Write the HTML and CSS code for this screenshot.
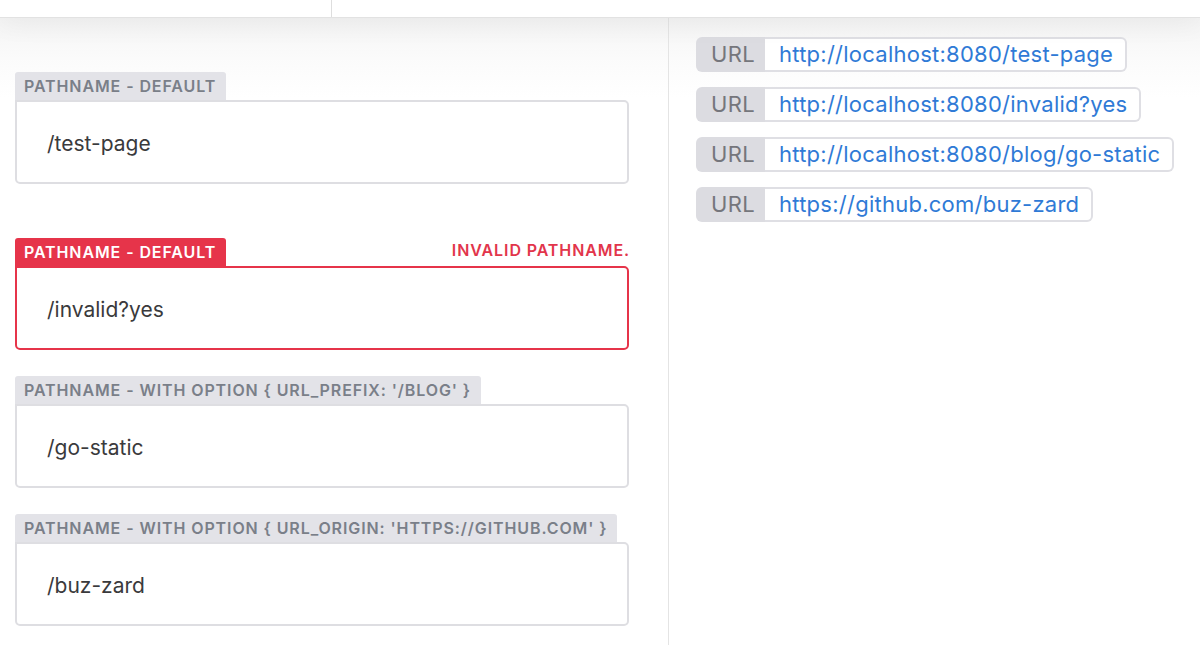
FILE: index.html
```html
<!DOCTYPE html>
<html>
<head>
<meta charset="utf-8">
<link rel="stylesheet" href="styles.css">
</head>
<body>
<div class="topbar">
  <div class="topbar-left"></div>
  <div class="topbar-right"></div>
</div>
<div class="main">
  <div class="left">
    <div class="field field--first">
      <div class="field-head">
        <span class="tab">Pathname - default</span>
      </div>
      <div class="box">/test-page</div>
    </div>
    <div class="field field--error">
      <div class="field-head">
        <span class="tab">Pathname - default</span>
        <span class="error">Invalid pathname.</span>
      </div>
      <div class="box">/invalid?yes</div>
    </div>
    <div class="field">
      <div class="field-head">
        <span class="tab">Pathname - with option { url_prefix: '/blog' }</span>
      </div>
      <div class="box">/go-static</div>
    </div>
    <div class="field">
      <div class="field-head">
        <span class="tab">Pathname - with option { url_origin: 'https://github.com' }</span>
      </div>
      <div class="box">/buz-zard</div>
    </div>
  </div>
  <div class="right">
    <div class="url"><span class="url-key">URL</span><span class="url-val">http://localhost:8080/test-page</span></div>
    <div class="url"><span class="url-key">URL</span><span class="url-val">http://localhost:8080/invalid?yes</span></div>
    <div class="url"><span class="url-key">URL</span><span class="url-val">http://localhost:8080/blog/go-static</span></div>
    <div class="url"><span class="url-key">URL</span><span class="url-val">https://github.com/buz-zard</span></div>
  </div>
</div>
</body>
</html>
```
FILE: styles.css
```css
* { box-sizing: border-box; }
html, body { margin: 0; padding: 0; }
body {
  width: 1200px;
  height: 645px;
  overflow: hidden;
  background: #fff;
  font-family: Inter, "Liberation Sans", Arial, sans-serif;
  display: flex;
  flex-direction: column;
}
.topbar {
  height: 18px;
  flex: none;
  display: flex;
  background: #fff;
  border-bottom: 1px solid #e2e2e2;
  box-shadow: 0 3px 28px rgba(0,0,0,0.07);
  position: relative;
  z-index: 2;
}
.topbar-left { width: 332px; border-right: 1px solid #dedede; }
.topbar-right { flex: 1; }
.main {
  flex: 1;
  display: flex;
  background: linear-gradient(#f4f4f4 0, #fbfbfb 40px, #fff 80px);
}
.left {
  width: 669px;
  flex: none;
  border-right: 1px solid #e4e4e4;
  padding: 54px 39px 0 15px;
  display: flex;
  flex-direction: column;
  gap: 26px;
}
.field { display: flex; flex-direction: column; }
.field--first { margin-bottom: 28px; }
.field-head {
  display: flex;
  justify-content: space-between;
  align-items: flex-end;
}
.tab {
  height: 28px;
  line-height: 29px;
  padding: 0 10px 0 9px;
  background: #e3e3e8;
  color: #7a7f89;
  font-size: 16px;
  font-weight: 600;
  letter-spacing: 0.9px;
  text-transform: uppercase;
  border-radius: 3px 3px 0 0;
  white-space: nowrap;
}
.error {
  color: #e2354b;
  font-size: 16px;
  font-weight: 600;
  letter-spacing: 0.9px;
  text-transform: uppercase;
  padding-bottom: 6px;
  margin-right: -1px;
}
.box {
  height: 84px;
  border: 2px solid #dedee2;
  border-radius: 0 5px 5px 5px;
  background: #fff;
  padding: 3px 0 0 30px;
  display: flex;
  align-items: center;
  font-size: 21px;
  color: #3a3a3c;
}
.field--error .tab { background: #e6344a; color: #fff; }
.field--error .box { border-color: #e6344a; }
.right {
  flex: 1;
  padding: 19px 0 0 27px;
  display: flex;
  flex-direction: column;
  align-items: flex-start;
  gap: 15px;
}
.url {
  display: flex;
  height: 35px;
  font-size: 22px;
  line-height: 31px;
}
.url-key {
  width: 69px;
  background: #dcdce1;
  color: #75767c;
  border-radius: 6px 0 0 6px;
  padding-left: 15px;
  line-height: 35px;
  letter-spacing: 0.3px;
}
.url-val {
  border: 2px solid #dfdfe4;
  border-left: none;
  border-radius: 0 6px 6px 0;
  background: #fff;
  color: #2f7ad6;
  padding: 0 12px 0 14px;
  letter-spacing: 0.25px;
  white-space: nowrap;
}
```
